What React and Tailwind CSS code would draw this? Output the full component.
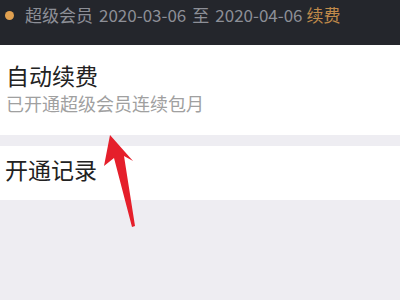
import React from 'react'

const font = { fontFamily: '"Noto Sans CJK SC", "Noto Sans", sans-serif' }

const Arrow = () => (
  <svg className="absolute left-0 top-0" width="400" height="300" viewBox="0 0 400 300">
    <polygon
      points="110,135 133,161 124,156 135,226 132,227 114,158 104,166"
      fill="#e51f2b"
    />
  </svg>
)

export default function App() {
  return (
    <div className="relative w-[400px] h-[300px] overflow-hidden bg-[#eeedf2]" style={font}>
      <div className="h-[45px] bg-[#24262c] flex items-start pt-[5px] pl-[5px]">
        <div className="flex items-center h-[20px] gap-[6px] text-[17px] leading-[20px] text-[#8d8f97]">
          <span className="w-[9px] h-[9px] rounded-full bg-[#e0a050] mr-[5px]" />
          <span>超级会员</span>
          <span>2020-03-06</span>
          <span>至</span>
          <span>2020-04-06</span>
          <span className="text-[#c08a4a] -ml-[2px]">续费</span>
        </div>
      </div>

      <div className="bg-white h-[90px] pl-[6px] pt-[16px]">
        <div className="text-[23px] leading-[28px] text-[#222]">自动续费</div>
        <div className="text-[18px] leading-[22px] text-[#a0a0a0] mt-[3px]">已开通超级会员连续包月</div>
      </div>

      <div className="h-[11px]" />

      <div className="bg-white h-[54px] pl-[5px] pt-[9px]">
        <div className="text-[23px] leading-[28px] text-[#222]">开通记录</div>
      </div>

      <Arrow />
    </div>
  )
}
